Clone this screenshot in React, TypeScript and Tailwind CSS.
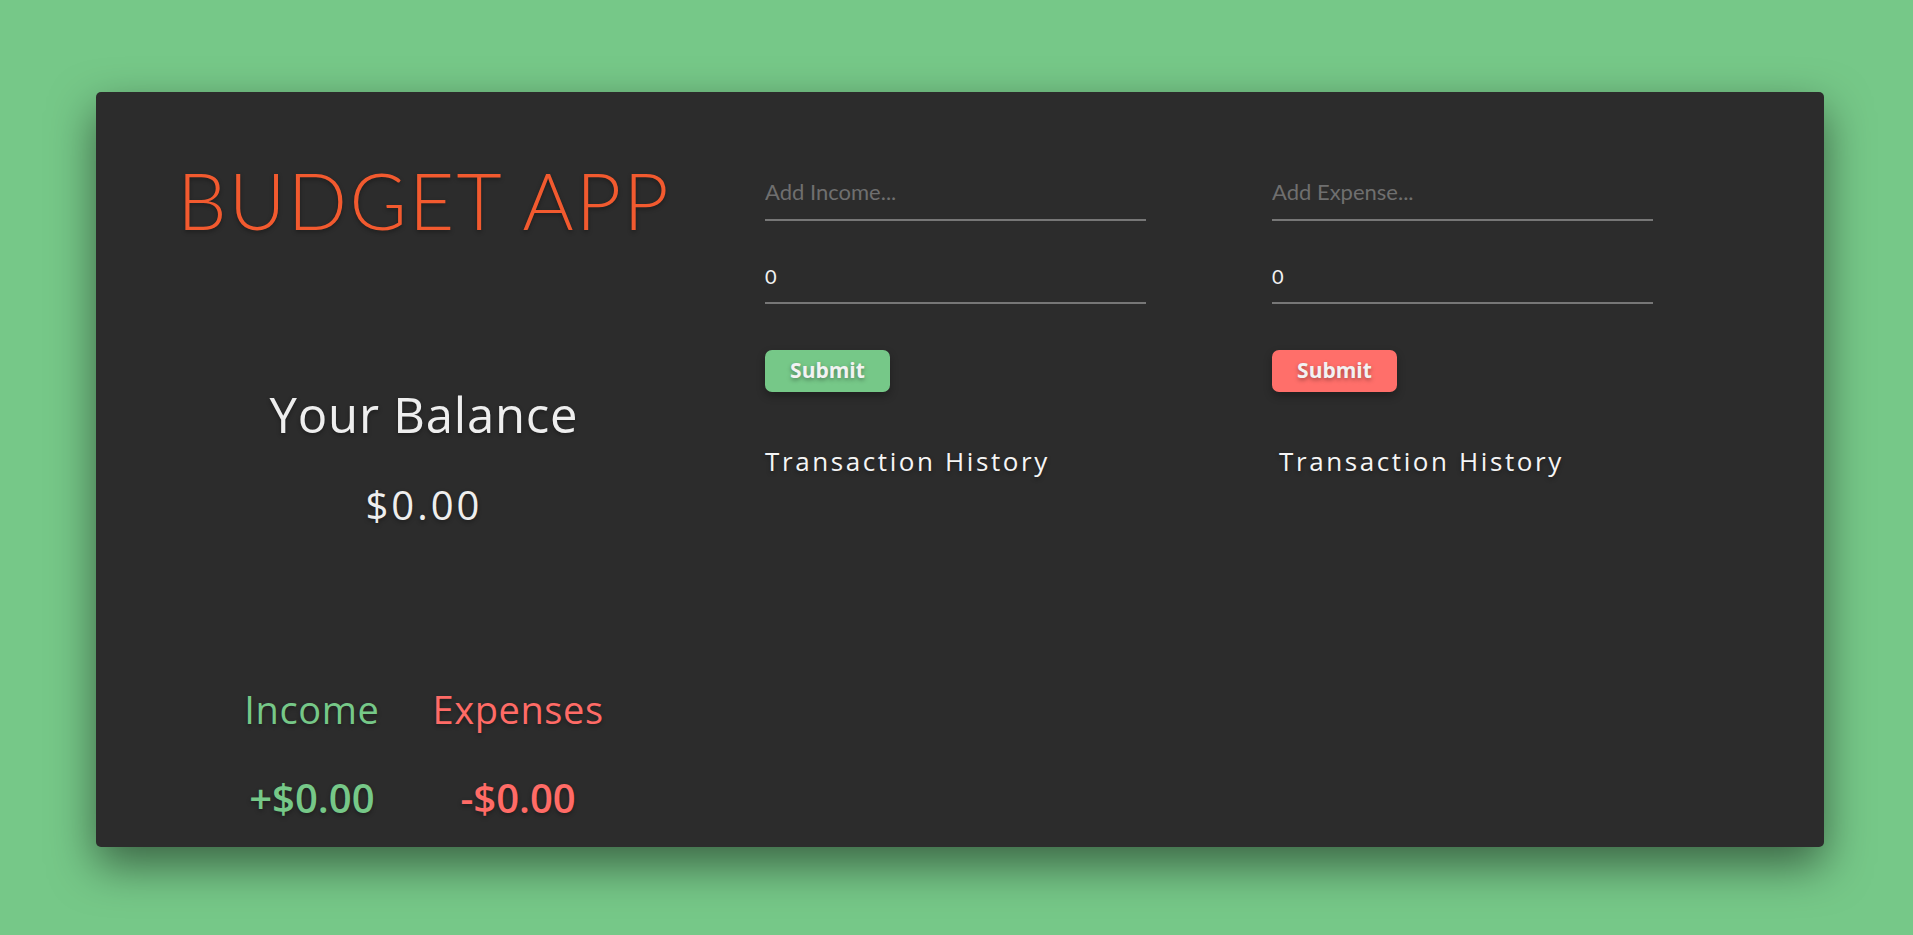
const shadow = "[text-shadow:0_2px_4px_rgba(0,0,0,0.35)]";
const sans = "font-['Open_Sans',sans-serif]";

const EntryForm = ({
  placeholder,
  buttonClass,
  historyClass,
}: {
  placeholder: string;
  buttonClass: string;
  historyClass: string;
}) => {
  return (
    <div className="flex w-[381px] flex-col items-start">
      <input
        type="text"
        placeholder={placeholder}
        className="block w-full border-b-2 border-[#777777] bg-transparent pb-[14px] text-[22px] leading-[22px] text-[#eeeeee] outline-none placeholder:text-[#6f6f6f]"
      />
      <input
        type="number"
        defaultValue={0}
        className="mt-[43px] block w-full border-b-2 border-[#777777] bg-transparent pb-[14px] text-[20px] leading-[20px] text-[#f2f2f2] outline-none [appearance:textfield]"
      />
      <button
        className={`mt-[46px] h-[42px] w-[125px] rounded-[7px] text-[21px] font-bold text-[#f2f2f2] shadow-[0_4px_8px_rgba(0,0,0,0.3)] ${sans} ${shadow} ${buttonClass}`}
      >
        Submit
      </button>
      <h3
        className={`mt-[56px] whitespace-nowrap text-[26px] leading-[26px] tracking-[2.6px] text-[#f5f5f5] ${sans} ${shadow} ${historyClass}`}
      >
        Transaction History
      </h3>
    </div>
  );
};

export default function App() {
  return (
    <div className="min-h-[935px] w-full bg-[#76c888] pt-[92px] font-['Lato',sans-serif]">
      <div className="ml-[96px] flex h-[755px] w-[1728px] rounded-[5px] bg-[#2c2c2c] pl-[85px] shadow-[0_18px_45px_rgba(0,0,0,0.5)]">
        <div className="flex w-[486px] flex-col items-center pt-[69px]">
          <h1
            className={`whitespace-nowrap text-[78px] font-light leading-[78px] tracking-[2.3px] text-[#f25a2f] ${shadow}`}
          >
            BUDGET APP
          </h1>
          <h2
            className={`mt-[151px] whitespace-nowrap text-[49px] leading-[49px] tracking-[0.8px] text-[#eeeeee] ${sans} ${shadow}`}
          >
            Your Balance
          </h2>
          <p
            className={`mt-[46px] text-[40px] leading-[40px] tracking-[3px] text-[#eeeeee] ${sans} ${shadow}`}
          >
            $0.00
          </p>
          <div className={`mt-[165px] flex justify-center gap-[53px] ${sans}`}>
            <div className="flex flex-col items-center">
              <h4
                className={`text-[38px] leading-[38px] tracking-[0.6px] text-[#76c888] ${shadow}`}
              >
                Income
              </h4>
              <p
                className={`mt-[50px] text-[40px] font-semibold leading-[40px] text-[#76c888] ${shadow}`}
              >
                +$0.00
              </p>
            </div>
            <div className="flex flex-col items-center">
              <h4
                className={`text-[38px] leading-[38px] tracking-[0.6px] text-[#ff6b66] ${shadow}`}
              >
                Expenses
              </h4>
              <p
                className={`mt-[50px] text-[40px] font-semibold leading-[40px] text-[#ff6b66] ${shadow}`}
              >
                -$0.00
              </p>
            </div>
          </div>
        </div>
        <div className="ml-[98px] pt-[86px]">
          <EntryForm placeholder="Add Income..." buttonClass="bg-[#76c888]" historyClass="" />
        </div>
        <div className="ml-[126px] pt-[86px]">
          <EntryForm
            placeholder="Add Expense..."
            buttonClass="bg-[#ff6f6a]"
            historyClass="ml-[7px]"
          />
        </div>
      </div>
    </div>
  );
}
